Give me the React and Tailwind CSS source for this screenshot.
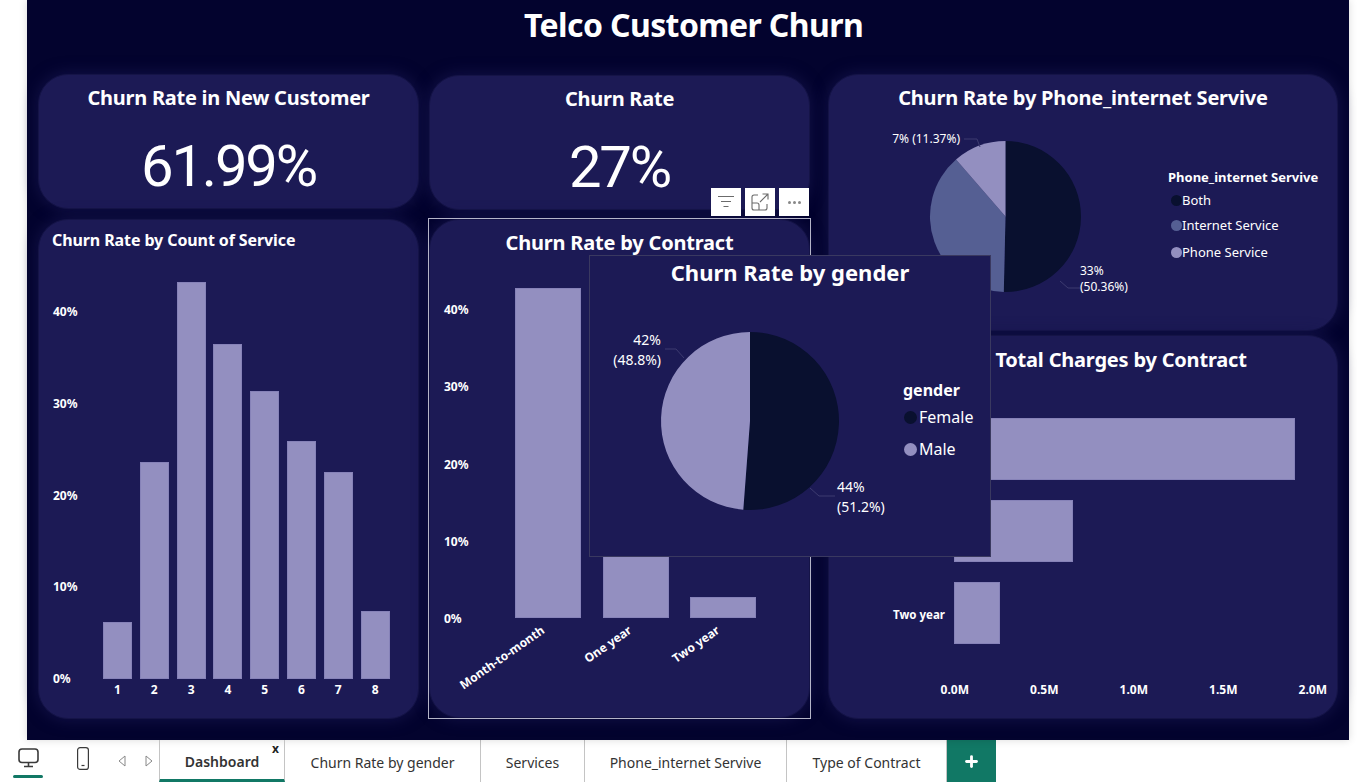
import React from "react";
import { Plus } from "lucide-react";

const serviceBars = [57, 217, 397, 335, 288, 238, 207, 68];
const contractBars = [
  { label: "Month-to-month", height: 330 },
  { label: "One year", height: 87 },
  { label: "Two year", height: 21 },
];
const chargeBars = [
  { label: "Month-to-month", width: 341 },
  { label: "One year", width: 119 },
  { label: "Two year", width: 46 },
];
const tabs = [
  { name: "Churn Rate by gender", w: "w-[196px]" },
  { name: "Services", w: "w-[104px]" },
  { name: "Phone_internet Servive", w: "w-[202px]" },
  { name: "Type of Contract", w: "w-[160px]" },
];

const DARK = "#09102f";
const MID = "#555f93";
const LIGHT = "#938fc0";

function slicePath(cx, cy, r, from, to) {
  const a = (from / 100) * Math.PI * 2;
  const b = (to / 100) * Math.PI * 2;
  const x1 = cx + r * Math.sin(a);
  const y1 = cy - r * Math.cos(a);
  const x2 = cx + r * Math.sin(b);
  const y2 = cy - r * Math.cos(b);
  const large = to - from > 50 ? 1 : 0;
  return `M${cx} ${cy}L${x1} ${y1}A${r} ${r} 0 ${large} 1 ${x2} ${y2}Z`;
}

function Pie({ cx, cy, r, slices }) {
  let start = 0;
  return slices.map((s) => {
    const d = slicePath(cx, cy, r, start, start + s.pct);
    start += s.pct;
    return <path key={s.color} d={d} fill={s.color} />;
  });
}

function Card({ className, children }) {
  return (
    <div className={`rounded-[30px] bg-[#1c1a55] border border-[#151447] shadow-[0_0_16px_#14134a] ${className}`}>
      {children}
    </div>
  );
}

function KpiCard({ title, value }) {
  return (
    <Card className="h-[135px] w-[381px] flex flex-col items-center text-white">
      <div className="mt-[8px] text-[20px] leading-[30px] font-bold tracking-[-0.25px]">{title}</div>
      <div className="mt-[19px] text-[58px] leading-[68px] font-['Roboto',sans-serif] font-normal tracking-[-2.2px]">{value}</div>
    </Card>
  );
}

function LegendItem({ color, label, className }) {
  return (
    <div className={`flex items-center ${className}`}>
      <span className="rounded-full size-[11px] ml-[3px]" style={{ backgroundColor: color }} />
      <span>{label}</span>
    </div>
  );
}

export default function App() {
  return (
    <div className="h-screen w-full bg-white overflow-hidden font-['Noto_Sans',sans-serif]">
      <main className="relative ml-[27px] h-[740px] w-[1322px] bg-[#03032e] shadow-[0_0_8px_rgba(0,0,0,0.15)] pl-[11px]">
        <h1 className="h-[74px] pt-[2px] text-center text-[32px] leading-[45px] font-bold text-white tracking-[-0.6px]">
          Telco Customer Churn
        </h1>

        <div className="flex">
          {/* left column */}
          <div className="flex flex-col gap-[10px] w-[381px]">
            <KpiCard title="Churn Rate in New Customer" value="61.99%" />
            <Card className="h-[500px] w-[381px] text-white">
              <div className="pl-[13px] pt-[7px] h-[62px] text-[16px] leading-[26px] font-bold tracking-[-0.1px]">
                Churn Rate by Count of Service
              </div>
              <div className="flex items-start">
                <div className="w-[64px] pl-[14px] mt-[23px] h-[381px] flex flex-col justify-between text-[12px] leading-[14px] font-bold">
                  <span>40%</span>
                  <span>30%</span>
                  <span>20%</span>
                  <span>10%</span>
                  <span>0%</span>
                </div>
                <div>
                  <div className="h-[397px] flex items-end gap-[7.8px]">
                    {serviceBars.map((h, i) => (
                      <div key={i} className="w-[29px] bg-[#938fc0] border border-[#8682b8]" style={{ height: h }} />
                    ))}
                  </div>
                  <div className="flex gap-[7.8px] mt-[3px] text-[12px] leading-[16px] font-bold">
                    {serviceBars.map((h, i) => (
                      <span key={i} className="w-[29px] text-center">{i + 1}</span>
                    ))}
                  </div>
                </div>
              </div>
            </Card>
          </div>

          {/* middle column */}
          <div className="relative flex flex-col gap-[9px] w-[381px] ml-[10px] mt-[1px]">
            <KpiCard title="Churn Rate" value="27%" />
            <div className="outline outline-[1px] outline-[#b4b4c8]">
              <Card className="h-[499px] w-[381px] text-white">
                <div className="h-[68px] pt-[8px] text-center text-[20px] leading-[30px] font-bold tracking-[-0.2px]">
                  Churn Rate by Contract
                </div>
                <div className="flex items-start">
                  <div className="w-[85px] pl-[14px] mt-[15px] h-[323px] flex flex-col justify-between text-[12px] leading-[14px] font-bold">
                    <span>40%</span>
                    <span>30%</span>
                    <span>20%</span>
                    <span>10%</span>
                    <span>0%</span>
                  </div>
                  <div>
                    <div className="h-[330px] flex items-end gap-[21.5px]">
                      {contractBars.map((b) => (
                        <div key={b.label} className="w-[66px] bg-[#938fc0] border border-[#8682b8]" style={{ height: b.height }} />
                      ))}
                    </div>
                    <div className="flex gap-[21.5px] mt-[3px] text-[12px] leading-[16px] font-bold">
                      {contractBars.map((b) => (
                        <div key={b.label} className="w-[66px] flex justify-end pr-[38px]">
                          <span className="shrink-0 whitespace-nowrap -rotate-[35deg] origin-right">{b.label}</span>
                        </div>
                      ))}
                    </div>
                  </div>
                </div>
              </Card>
            </div>

            {/* visual header shown on the focused chart */}
            <div className="absolute left-[282px] top-[113px] flex gap-[4px]">
              <button className="w-[30px] h-[28px] bg-white flex items-center justify-center text-[#6b6b6b]">
                <svg width="16" height="14" viewBox="0 0 16 14" fill="none" stroke="currentColor" strokeWidth="1">
                  <path d="M0 1.5h16M3 6.5h10M5.5 11.5h5" />
                </svg>
              </button>
              <button className="w-[30px] h-[28px] bg-white flex items-center justify-center text-[#6b6b6b]">
                <svg width="18" height="18" viewBox="0 0 18 18" fill="none" stroke="currentColor" strokeWidth="1.1">
                  <path d="M7 2H3a2 2 0 0 0-2 2v11a2 2 0 0 0 2 2h11a2 2 0 0 0 2-2v-4M1 10h5a2 2 0 0 1 2 2v5M9 9l8-8M11.5 1H17v5.5" />
                </svg>
              </button>
              <button className="w-[30px] h-[28px] bg-white flex items-center justify-center gap-[2px]">
                <span className="size-[3px] rounded-full bg-[#888]" />
                <span className="size-[3px] rounded-full bg-[#888]" />
                <span className="size-[3px] rounded-full bg-[#888]" />
              </button>
            </div>
          </div>

          {/* right column */}
          <div className="flex flex-col gap-[4px] w-[510px] ml-[18px]">
            <Card className="h-[257px] text-white">
              <div className="h-[45px] pt-[8px] text-center text-[20px] leading-[30px] font-bold tracking-[-0.2px]">
                Churn Rate by Phone_internet Servive
              </div>
              <div className="flex">
                <svg width="338" height="190" viewBox="829 119 338 190" className="shrink-0 text-[12px]">
                  <Pie
                    cx={1005.5}
                    cy={215.5}
                    r={75.5}
                    slices={[
                      { pct: 50.36, color: DARK },
                      { pct: 38.27, color: MID },
                      { pct: 11.37, color: LIGHT },
                    ]}
                  />
                  <path d="M964 138h13l3 8" fill="none" stroke="#3d3b70" />
                  <path d="M1060 280l8 7h12" fill="none" stroke="#3d3b70" />
                  <text x="960" y="142" textAnchor="end" fill="#fff">7% (11.37%)</text>
                  <text x="1080" y="274" fill="#fff">33%</text>
                  <text x="1080" y="290" fill="#fff">(50.36%)</text>
                </svg>
                <div className="pt-[48px] text-[13px] leading-[20px] pl-[1px]">
                  <div className="font-bold -mt-[1px]">Phone_internet Servive</div>
                  <LegendItem color={DARK} label="Both" className="mt-[3px]" />
                  <LegendItem color={MID} label="Internet Service" className="mt-[5px]" />
                  <LegendItem color={LIGHT} label="Phone Service" className="mt-[7px]" />
                </div>
              </div>
            </Card>
            <Card className="h-[384px] text-white">
              <div className="h-[82px] pt-[9px] text-center text-[20px] leading-[30px] font-bold tracking-[-0.2px] pl-[76px]">
                Total Charges by Contract
              </div>
              <div className="flex flex-col gap-[20px]">
                {chargeBars.map((b) => (
                  <div key={b.label} className="flex items-center h-[62px]">
                    <span className="w-[116px] pt-[3px] text-right text-[11.5px] font-bold whitespace-nowrap">{b.label}</span>
                    <span className="w-[9px]" />
                    <div className="h-[62px] bg-[#938fc0] border border-[#8682b8]" style={{ width: b.width }} />
                  </div>
                ))}
              </div>
              <div className="flex ml-[81px] mt-[38px] text-[12px] leading-[16px] font-bold">
                {["0.0M", "0.5M", "1.0M", "1.5M", "2.0M"].map((t) => (
                  <span key={t} className="w-[89.5px] shrink-0 text-center">{t}</span>
                ))}
              </div>
            </Card>
          </div>
        </div>

        {/* chart popped out over the page */}
        <section className="absolute left-[562px] top-[255px] h-[302px] w-[402px] bg-[#1c1a55] border border-[#3a3960] text-white">
          <div className="h-[36px] text-center text-[22px] leading-[32px] font-bold">Churn Rate by gender</div>
          <div className="flex">
            <svg width="306" height="230" viewBox="590 292 306 230" className="shrink-0 text-[14px]">
              <Pie
                cx={750}
                cy={421}
                r={89}
                slices={[
                  { pct: 51.2, color: DARK },
                  { pct: 48.8, color: LIGHT },
                ]}
              />
              <path d="M665 349h11l8 9" fill="none" stroke="#3d3b70" />
              <path d="M810 488l9 8h16" fill="none" stroke="#3d3b70" />
              <text x="661" y="345" textAnchor="end" fill="#fff">42%</text>
              <text x="661" y="365" textAnchor="end" fill="#fff">(48.8%)</text>
              <text x="837" y="492" fill="#fff">44%</text>
              <text x="837" y="512" fill="#fff">(51.2%)</text>
            </svg>
            <div className="ml-[7px] pt-[86px] text-[16px] leading-[24px]">
              <div className="font-bold">gender</div>
              <div className="flex items-center mt-[3px]">
                <span className="size-[13px] rounded-full bg-[#09102f] mr-[2px] ml-[1px]" />
                <span>Female</span>
              </div>
              <div className="flex items-center mt-[8px]">
                <span className="size-[13px] rounded-full bg-[#938fc0] mr-[2px] ml-[1px]" />
                <span>Male</span>
              </div>
            </div>
          </div>
        </section>
      </main>

      {/* page tabs */}
      <nav className="h-[42px] flex text-[14px] text-[#333]">
        <div className="w-[159px] relative flex items-center">
          <svg width="21" height="20" viewBox="0 0 21 20" fill="none" stroke="#3a3a3a" strokeWidth="1.6" className="ml-[18px] -mt-[7px]">
            <rect x="1" y="1" width="19" height="13.5" rx="3" />
            <path d="M10.5 14.5v3.5M6 18.5h9" />
          </svg>
          <svg width="12" height="23" viewBox="0 0 12 23" fill="none" stroke="#3a3a3a" strokeWidth="1.2" className="ml-[38px] -mt-[5px]">
            <rect x="0.6" y="0.6" width="10.8" height="21.8" rx="2.5" />
            <path d="M4.5 18.5h3" />
          </svg>
          <span className="absolute left-[13px] top-[35px] h-[3px] w-[30px] rounded-full bg-[#117865]" />
          <svg width="8" height="12" viewBox="0 0 8 12" className="ml-[29px] text-[#888]" fill="none" stroke="currentColor">
            <path d="M7 1L1 6l6 5z" />
          </svg>
          <svg width="8" height="12" viewBox="0 0 8 12" className="ml-[19px] text-[#888]" fill="none" stroke="currentColor">
            <path d="M1 1l6 5-6 5z" />
          </svg>
        </div>
        <div className="relative w-[126px] flex items-center justify-center border-x border-[#c4c4c4] border-b-[3px] border-b-[#117865] font-semibold pt-[3px]">
          Dashboard
          <span className="absolute right-[5px] top-[-1px] text-[12px] leading-[20px] font-bold text-[#222]">x</span>
        </div>
        {tabs.map((t) => (
          <div key={t.name} className={`${t.w} flex items-center justify-center border-r border-[#c4c4c4] pt-[2px]`}>
            {t.name}
          </div>
        ))}
        <div className="w-[49px] bg-[#117865] flex items-center justify-center text-white">
          <Plus size={17} strokeWidth={4} />
        </div>
      </nav>
    </div>
  );
}
